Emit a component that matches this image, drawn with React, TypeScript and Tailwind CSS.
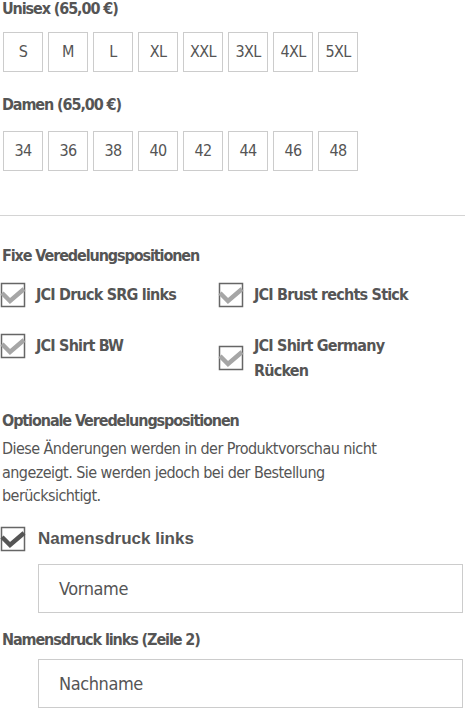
import React from "react";

const F = { fontFamily: '"DejaVu Sans Condensed", "Liberation Sans", sans-serif' };

function Check({ dark }: { dark?: boolean }) {
  return (
    <svg width="26" height="26" viewBox="0 0 26 26" className="shrink-0">
      <rect x="1.5" y="1.5" width="23" height="23" fill="white" stroke="#666" strokeWidth="1.5" />
      <polyline
        points="2,11 10,19 24,7"
        fill="none"
        stroke={dark ? "#555" : "#a6a6a6"}
        strokeWidth="4.5"
        strokeLinecap="butt"
        strokeLinejoin="miter"
      />
    </svg>
  );
}

function SizeRow({ items }: { items: string[] }) {
  return (
    <div className="flex gap-[5px] pl-[3px]">
      {items.map((s) => (
        <div
          key={s}
          className="flex h-[40px] w-[40px] items-center justify-center border border-[#cccccc] text-[16px] tracking-[-0.6px] text-[#555]"
        >
          {s}
        </div>
      ))}
    </div>
  );
}

function Heading({ children, className }: { children: React.ReactNode; className?: string }) {
  return (
    <div className={"pl-[2px] text-[16px] font-bold leading-[16px] tracking-[-1.1px] " + (className ?? "")}>{children}</div>
  );
}

export default function App() {
  return (
    <div className="w-[465px] bg-white text-[#555]" style={F}>
      <div className="pl-[2px] text-[16px] font-bold leading-[18px] tracking-[-1.1px]">Unisex (65,00 €)</div>
      <div className="mt-[14px]">
        <SizeRow items={["S", "M", "L", "XL", "XXL", "3XL", "4XL", "5XL"]} />
      </div>
      <Heading className="mt-[25px]">Damen (65,00 €)</Heading>
      <div className="mt-[18px]">
        <SizeRow items={["34", "36", "38", "40", "42", "44", "46", "48"]} />
      </div>
      <div className="mt-[44px] h-px bg-[#d4d4d4]" />
      <Heading className="mt-[32px]">Fixe Veredelungspositionen</Heading>
      <div className="mt-[18px] grid grid-cols-[218px_1fr] items-start gap-y-[25px]">
        <div className="flex items-center gap-[10px]">
          <Check />
          <span className="text-[16px] font-bold leading-[24px] tracking-[-0.8px]">JCI Druck SRG links</span>
        </div>
        <div className="flex items-center gap-[10px]">
          <Check />
          <span className="text-[16px] font-bold leading-[24px] tracking-[-0.8px]">JCI Brust rechts Stick</span>
        </div>
        <div className="flex items-center gap-[10px]">
          <Check />
          <span className="text-[16px] font-bold leading-[24px] tracking-[-0.8px]">JCI Shirt BW</span>
        </div>
        <div className="flex items-center gap-[10px]">
          <Check />
          <span className="text-[16px] font-bold leading-[25px] tracking-[-0.8px]">
            JCI Shirt Germany
            <br />
            Rücken
          </span>
        </div>
      </div>
      <Heading className="mt-[30px]">Optionale Veredelungspositionen</Heading>
      <p className="mt-[8px] pl-[2px] text-[16px] leading-[23.5px] tracking-[-0.55px]">
        Diese Änderungen werden in der Produktvorschau nicht
        <br />
        angezeigt. Sie werden jedoch bei der Bestellung
        <br />
        berücksichtigt.
      </p>
      <div className="mt-[18px] flex items-center gap-[12px]">
        <Check dark />
        <span className="text-[17px] font-bold leading-[24px]" style={{ fontFamily: '"Liberation Sans", Arial, sans-serif' }}>
          Namensdruck links
        </span>
      </div>
      <div className="mt-[12px] pl-[38px] pr-[2px]">
        <div className="flex h-[49px] items-center border border-[#cccccc] pl-[20px] text-[18px] tracking-[-0.4px] text-[#555]">Vorname</div>
      </div>
      <Heading className="mt-[19px]">Namensdruck links (Zeile 2)</Heading>
      <div className="mt-[11px] pl-[38px] pr-[2px]">
        <div className="flex h-[49px] items-center border border-[#cccccc] pl-[20px] text-[18px] tracking-[-0.4px] text-[#555]">Nachname</div>
      </div>
    </div>
  );
}
